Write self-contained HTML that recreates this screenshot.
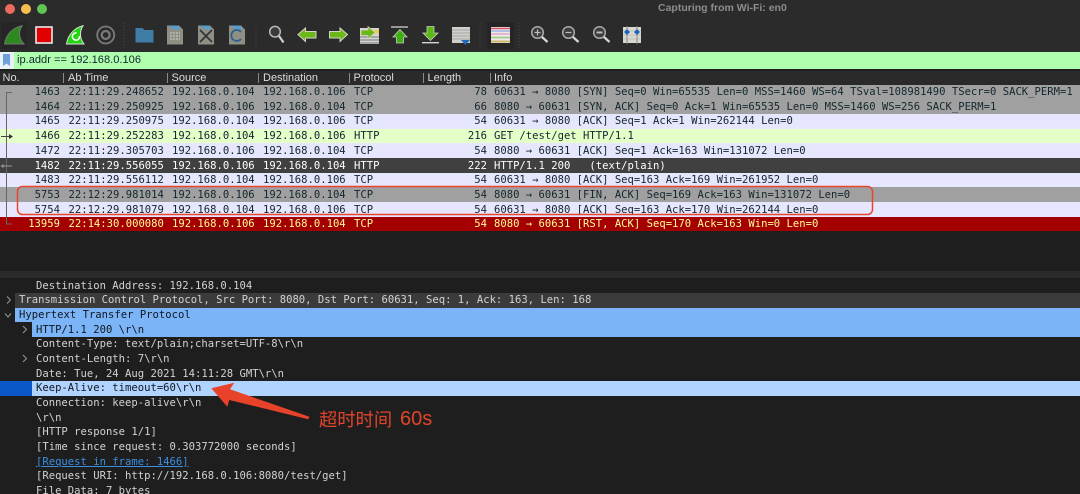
<!DOCTYPE html>
<html><head><meta charset="utf-8">
<style>
html,body{margin:0;padding:0;background:#1e1e1e}
#p{position:relative;width:1080px;height:494px;overflow:hidden;background:#1e1e1e;font-family:"DejaVu Sans Mono","Liberation Mono",monospace;font-size:10.57px;filter:blur(.3px)}
.a{position:absolute}
.t{position:absolute;white-space:pre;line-height:14.7px;height:14.7px}
.r{position:absolute;left:0;width:1080px;height:14.7px;color:#12272e}
.r span{position:absolute;top:.6px;white-space:pre;line-height:14.7px}
.n{right:1020px}.ti{left:68.5px}.s{left:172px}.d{left:263px}.pr{left:354px}.l{right:593px}.i{left:494px}
.gr{background:#a0a0a0}.lt{background:#e7e6ff}.gn{background:#e4ffc7}.dk{background:#404040;color:#fff}.rd{background:#a40000;color:#fffc9c}
.h{position:absolute;top:71px;height:14px;font:11px/15px "Liberation Sans",sans-serif;color:#dcdcdc;white-space:pre}
.sep{position:absolute;top:73px;width:1px;height:10px;background:#8a8a8a}
.x{color:#d2d2d2}
</style></head><body><div id="p">

<div class="a" style="left:0;top:0;width:1080px;height:52px;background:#2b2b2b"></div>
<div class="a" style="left:5px;top:4px;width:10px;height:10px;border-radius:50%;background:#ed6a5e"></div>
<div class="a" style="left:21px;top:4px;width:10px;height:10px;border-radius:50%;background:#f4bf4f"></div>
<div class="a" style="left:37px;top:4px;width:10px;height:10px;border-radius:50%;background:#61c554"></div>
<div class="a" style="left:658px;top:2px;font:bold 10.5px/13px 'Liberation Sans',sans-serif;color:#8d8d8d;white-space:pre">Capturing from Wi-Fi: en0</div>

<svg class="a" style="left:0;top:0" width="1080" height="52" viewBox="0 0 1080 52">
<rect x="1" y="22" width="26" height="27" fill="#262626"/>
<rect x="487" y="22" width="27" height="27" fill="#252525"/>
<path d="M4.500 44C6 35 12 28 22 25.700C18 32 19 39 24 44Z" fill="#2c8a1c" stroke="#777" stroke-width="1"/>
<rect x="36" y="27" width="16" height="16" fill="#e00000" stroke="#e8e8e8" stroke-width="1.6"/>
<path d="M66.500 44C68 35 74 28 83 25.700C79 32 80 39 84 44Z" fill="#1fd60f" stroke="#ddd" stroke-width="1"/>
<path d="M79.500 36a3.600 3.600 0 1 1-3-3" fill="none" stroke="#fff" stroke-width="1.6"/>
<circle cx="105.700" cy="35" r="8.500" fill="none" stroke="#7a7a7a" stroke-width="1.800"/>
<circle cx="105.700" cy="35" r="4" fill="none" stroke="#7a7a7a" stroke-width="2.200"/>
<path d="M124 23V48M256 23V48M480 23V48M519 23V48" stroke="#4a4a4a" stroke-width="1" stroke-dasharray="1 2"/>
<path d="M135.500 28h7l2 2h9v12.500h-18z" fill="#3f7ca6"/>
<path d="M167 25.500h12l4 4v15h-16z" fill="#8f8f86"/><path d="M168 25.500h10l3 4h-7z" fill="#5d9cc8"/>
<path d="M170 33h10M170 36h10M170 39h10" stroke="#bcbcb2" stroke-width="1.500" stroke-dasharray="2 1"/>
<path d="M198 25.500h12l4 4v15h-16z" fill="#8f8f86"/><path d="M199 25.500h10l3 4h-7z" fill="#5d9cc8"/>
<path d="M200 30l12 12M212 30l-12 12" stroke="#333" stroke-width="1.700"/>
<path d="M229 25.500h12l4 4v15h-16z" fill="#8f8f86"/><path d="M230 25.500h10l3 4h-7z" fill="#5d9cc8"/>
<path d="M241 39a5.500 5.500 0 1 1 0-7" fill="none" stroke="#2e5f8e" stroke-width="1.800"/>
<circle cx="275" cy="31.700" r="5.300" fill="#3a3a3a" stroke="#b8b8b8" stroke-width="1.500"/>
<path d="M279 36l4.500 6.500" stroke="#d0d0d0" stroke-width="2.200"/>
<path d="M298 34.500l7.500-6.500v3.500h10.500v6.500h-10.500v3.500z" fill="#6cb81a" stroke="#d5d5c5" stroke-width="1"/>
<path d="M347.500 34.500l-7.500-6.500v3.500h-10.500v6.500h10.500v3.500z" fill="#6cb81a" stroke="#d5d5c5" stroke-width="1"/>
<path d="M360 28h19v16h-19z" fill="#d4d4d0"/><path d="M360 37h19M360 40h19M360 43h19" stroke="#777" stroke-width="1"/>
<rect x="374" y="30" width="5" height="3.500" fill="#e8d040"/>
<path d="M375 32.500l-7-6v3.500h-7v5.500h7v3.500z" fill="#6cb81a" stroke="#d5d5c5" stroke-width=".7"/>
<path d="M391 27h17" stroke="#d5d5d5" stroke-width="1.300"/>
<path d="M400 29.500l7 7.500h-3.500v6h-7v-6h-3.500z" fill="#3fae12" stroke="#ccc" stroke-width=".8"/>
<path d="M422 42.700h17" stroke="#d5d5d5" stroke-width="1.300"/>
<path d="M430.500 40.500l7.500-7.500h-4v-6.500h-7v6.500h-4z" fill="#5cb814" stroke="#ccc" stroke-width=".8"/>
<rect x="452" y="27" width="18" height="16" fill="#cfcfcb"/><path d="M452 30h18M452 33h18M452 36h18M452 39h18" stroke="#9a9a9a" stroke-width=".8"/>
<path d="M461 40h9l-4.500 5z" fill="#2468b8"/>
<rect x="491" y="27" width="19" height="16" fill="#e9e9e9"/>
<path d="M491 28.500h19" stroke="#d9535f" stroke-width="1.500"/><path d="M491 31h19" stroke="#9ab6e8" stroke-width="1.500"/><path d="M491 34h19" stroke="#e5a5c5" stroke-width="1.500"/><path d="M491 37.500h19" stroke="#a0c878" stroke-width="1.500"/><path d="M491 41.500h19" stroke="#cdb86b" stroke-width="2"/>
<g fill="#3c3c3c" stroke="#aaa" stroke-width="1.500"><circle cx="537.500" cy="32.500" r="5.800"/><circle cx="568.500" cy="32.500" r="5.800"/><circle cx="599.500" cy="32.500" r="5.800"/></g>
<path d="M542 37l5.500 5M573 37l5.500 5M604 37l5.500 5" stroke="#d8d8d8" stroke-width="2.200"/>
<path d="M534.500 32.500h6M537.500 29.500v6M565.500 32.500h6" stroke="#bbb" stroke-width="1.200"/><path d="M596.500 32.500h6" stroke="#bbb" stroke-width="2"/>
<rect x="623" y="27" width="18" height="16" fill="#d8d8d0"/><path d="M623 31h18M623 35h18M623 39h18" stroke="#bbb" stroke-width=".7"/>
<path d="M627 26v18M637 26v18" stroke="#8a8a8a" stroke-width="1"/>
<path d="M624 32l3-3v6zM640 32l-3-3v6zM630 32l-3-3v6zM634 32l3-3v6z" fill="#1c63b8"/>
</svg>

<div class="a" style="left:0;top:52px;width:1080px;height:17px;background:#afffaf"></div>
<div class="a" style="left:0;top:52px;width:14px;height:17px;background:#e8f0f8"></div>
<svg class="a" style="left:3px;top:54px" width="8" height="13"><path d="M0 0h7v12l-3.500-2.500L0 12z" fill="#6f9fd8"/></svg>
<div class="a" style="left:17px;top:53px;font:11.100px/15px 'Liberation Sans',sans-serif;color:#12272e;white-space:pre">ip.addr == 192.168.0.106</div>
<div class="a" style="left:0;top:69px;width:1080px;height:2px;background:#1f1f1f"></div>
<div class="a" style="left:0;top:71px;width:1080px;height:14px;background:#2a2a2a"></div>
<div class="h" style="left:2.500px">No.</div><div class="sep" style="left:63px"></div>
<div class="h" style="left:68px">Ab Time</div><div class="sep" style="left:167px"></div>
<div class="h" style="left:171.500px">Source</div><div class="sep" style="left:258px"></div>
<div class="h" style="left:263px">Destination</div><div class="sep" style="left:349px"></div>
<div class="h" style="left:353.500px">Protocol</div><div class="sep" style="left:423px"></div>
<div class="h" style="left:427.500px">Length</div><div class="sep" style="left:490px"></div>
<div class="h" style="left:494px">Info</div>

<div class="r gr" style="top:84.500px"><span class="n">1463</span><span class="ti">22:11:29.248652</span><span class="s">192.168.0.104</span><span class="d">192.168.0.106</span><span class="pr">TCP</span><span class="l">78</span><span class="i">60631 → 8080 [SYN] Seq=0 Win=65535 Len=0 MSS=1460 WS=64 TSval=108981490 TSecr=0 SACK_PERM=1</span></div>
<div class="r gr" style="top:99.200px"><span class="n">1464</span><span class="ti">22:11:29.250925</span><span class="s">192.168.0.106</span><span class="d">192.168.0.104</span><span class="pr">TCP</span><span class="l">66</span><span class="i">8080 → 60631 [SYN, ACK] Seq=0 Ack=1 Win=65535 Len=0 MSS=1460 WS=256 SACK_PERM=1</span></div>
<div class="r lt" style="top:113.900px"><span class="n">1465</span><span class="ti">22:11:29.250975</span><span class="s">192.168.0.104</span><span class="d">192.168.0.106</span><span class="pr">TCP</span><span class="l">54</span><span class="i">60631 → 8080 [ACK] Seq=1 Ack=1 Win=262144 Len=0</span></div>
<div class="r gn" style="top:128.600px"><span class="n">1466</span><span class="ti">22:11:29.252283</span><span class="s">192.168.0.104</span><span class="d">192.168.0.106</span><span class="pr">HTTP</span><span class="l">216</span><span class="i">GET /test/get HTTP/1.1</span></div>
<div class="r lt" style="top:143.300px"><span class="n">1472</span><span class="ti">22:11:29.305703</span><span class="s">192.168.0.106</span><span class="d">192.168.0.104</span><span class="pr">TCP</span><span class="l">54</span><span class="i">8080 → 60631 [ACK] Seq=1 Ack=163 Win=131072 Len=0</span></div>
<div class="r dk" style="top:158px"><span class="n">1482</span><span class="ti">22:11:29.556055</span><span class="s">192.168.0.106</span><span class="d">192.168.0.104</span><span class="pr">HTTP</span><span class="l">222</span><span class="i">HTTP/1.1 200   (text/plain)</span></div>
<div class="r lt" style="top:172.700px"><span class="n">1483</span><span class="ti">22:11:29.556112</span><span class="s">192.168.0.104</span><span class="d">192.168.0.106</span><span class="pr">TCP</span><span class="l">54</span><span class="i">60631 → 8080 [ACK] Seq=163 Ack=169 Win=261952 Len=0</span></div>
<div class="r gr" style="top:187.400px"><span class="n">5753</span><span class="ti">22:12:29.981014</span><span class="s">192.168.0.106</span><span class="d">192.168.0.104</span><span class="pr">TCP</span><span class="l">54</span><span class="i">8080 → 60631 [FIN, ACK] Seq=169 Ack=163 Win=131072 Len=0</span></div>
<div class="r lt" style="top:202.100px"><span class="n">5754</span><span class="ti">22:12:29.981079</span><span class="s">192.168.0.104</span><span class="d">192.168.0.106</span><span class="pr">TCP</span><span class="l">54</span><span class="i">60631 → 8080 [ACK] Seq=163 Ack=170 Win=262144 Len=0</span></div>
<div class="r rd" style="top:216.800px"><span class="n">13959</span><span class="ti">22:14:30.000080</span><span class="s">192.168.0.106</span><span class="d">192.168.0.104</span><span class="pr">TCP</span><span class="l">54</span><span class="i">8080 → 60631 [RST, ACK] Seq=170 Ack=163 Win=0 Len=0</span></div>

<svg class="a" style="left:0;top:84px" width="20" height="148">
<path d="M12 8.500H6.500V140H12" fill="none" stroke="#666" stroke-width="1"/>
<path d="M1 52.500H10" stroke="#444" stroke-width="1"/><path d="M13 52.500l-4-2.500v5z" fill="#333"/>
<path d="M1 82H12" stroke="#999" stroke-width="1"/><path d="M0.500 82l3-2v4z" fill="#999"/>
</svg>
<svg class="a" style="left:0;top:0" width="1080" height="494">
<rect x="17.500" y="186.500" width="855" height="28" rx="5" fill="none" stroke="#e8452c" stroke-width="1.500"/>
</svg>

<div class="a" style="left:0;top:271px;width:1080px;height:7px;background:#2b2b2b"></div>
<div class="a" style="left:15px;top:293.300px;width:1065px;height:14.400px;background:#3b3b3b"></div>
<div class="a" style="left:15px;top:307.700px;width:1065px;height:14.700px;background:#7cb4f8"></div>
<div class="a" style="left:32px;top:322.400px;width:1048px;height:14.900px;background:#7cb4f8"></div>
<div class="a" style="left:0;top:381px;width:32px;height:14.700px;background:#0a58c8"></div>
<div class="a" style="left:32px;top:381px;width:1048px;height:14.700px;background:#b0d4ff"></div>

<div class="t x" style="left:36px;top:278.600px">Destination Address: 192.168.0.104</div>
<div class="t x" style="left:19px;top:293.300px">Transmission Control Protocol, Src Port: 8080, Dst Port: 60631, Seq: 1, Ack: 163, Len: 168</div>
<div class="t" style="left:19px;top:308px;color:#101820">Hypertext Transfer Protocol</div>
<div class="t" style="left:36px;top:322.600px;color:#101820">HTTP/1.1 200 \r\n</div>
<div class="t x" style="left:36px;top:337.300px">Content-Type: text/plain;charset=UTF-8\r\n</div>
<div class="t x" style="left:36px;top:352px">Content-Length: 7\r\n</div>
<div class="t x" style="left:36px;top:366.600px">Date: Tue, 24 Aug 2021 14:11:28 GMT\r\n</div>
<div class="t" style="left:36px;top:381.300px;color:#101820">Keep-Alive: timeout=60\r\n</div>
<div class="t x" style="left:36px;top:396px">Connection: keep-alive\r\n</div>
<div class="t x" style="left:36px;top:410.600px">\r\n</div>
<div class="t x" style="left:36px;top:425.300px">[HTTP response 1/1]</div>
<div class="t x" style="left:36px;top:440px">[Time since request: 0.303772000 seconds]</div>
<div class="t" style="left:36px;top:454.600px;color:#3b8ee0;text-decoration:underline">[Request in frame: 1466]</div>
<div class="t x" style="left:36px;top:469.300px">[Request URI: http://192.168.0.106:8080/test/get]</div>
<div class="t x" style="left:36px;top:483.500px">File Data: 7 bytes</div>

<svg class="a" style="left:0;top:0" width="40" height="494">
<path d="M7 296.500l3.500 3.500L7 303.500M23 326l3.500 3.500L23 333M23 355l3.500 3.500L23 362" fill="none" stroke="#999" stroke-width="1"/>
<path d="M5 313.500l3 3.500 3-3.500" fill="none" stroke="#999" stroke-width="1"/>
</svg>

<svg class="a" style="left:0;top:0" width="1080" height="494">
<path d="M211.300 388.300L234.300 382.700L230 389.300L309.300 416.700L308.300 419.300L229.300 400L227.300 406.700Z" fill="#e8432a"/>
</svg>
<div class="a" style="left:319px;top:408px;font:18.300px/22px 'Noto Sans CJK SC','Liberation Sans',sans-serif;color:#e0442a;white-space:pre">超时时间</div>
<div class="a" style="left:400px;top:408px;font:20px/22px 'Liberation Sans',sans-serif;color:#e0442a;white-space:pre">60s</div>
</div></body></html>
